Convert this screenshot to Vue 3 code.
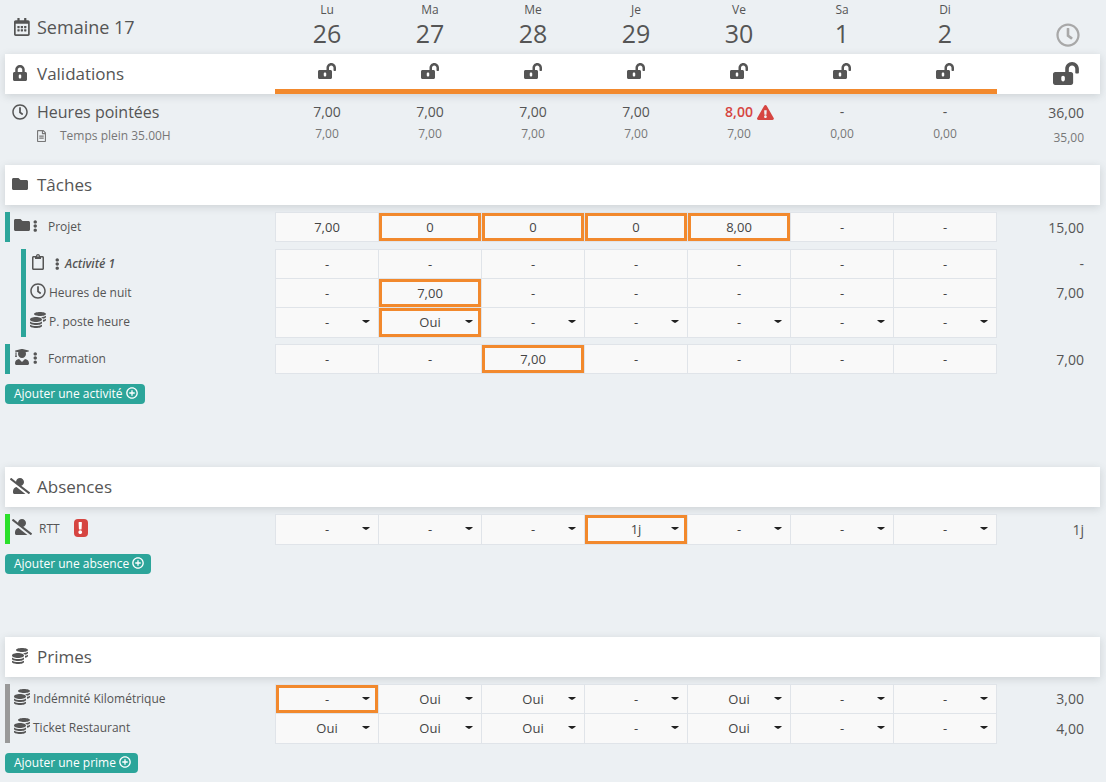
<script setup>
import { h, reactive } from 'vue'

const shapes = {
  calendar: ['0 0 448 512', 'M148 288h-40c-6.6 0-12-5.4-12-12v-40c0-6.6 5.4-12 12-12h40c6.6 0 12 5.4 12 12v40c0 6.6-5.4 12-12 12zm108-12v-40c0-6.6-5.4-12-12-12h-40c-6.6 0-12 5.4-12 12v40c0 6.6 5.4 12 12 12h40c6.6 0 12-5.4 12-12zm96 0v-40c0-6.6-5.4-12-12-12h-40c-6.6 0-12 5.4-12 12v40c0 6.6 5.4 12 12 12h40c6.6 0 12-5.4 12-12zm-96 96v-40c0-6.6-5.4-12-12-12h-40c-6.6 0-12 5.4-12 12v40c0 6.6 5.4 12 12 12h40c6.6 0 12-5.4 12-12zm-96 0v-40c0-6.6-5.4-12-12-12h-40c-6.6 0-12 5.4-12 12v40c0 6.6 5.4 12 12 12h40c6.6 0 12-5.4 12-12zm192 0v-40c0-6.6-5.4-12-12-12h-40c-6.6 0-12 5.4-12 12v40c0 6.6 5.4 12 12 12h40c6.6 0 12-5.4 12-12zm96-260v352c0 26.5-21.5 48-48 48H48c-26.5 0-48-21.5-48-48V112c0-26.5 21.5-48 48-48h48V12c0-6.6 5.4-12 12-12h40c6.6 0 12 5.4 12 12v52h128V12c0-6.6 5.4-12 12-12h40c6.6 0 12 5.4 12 12v52h48c26.5 0 48 21.5 48 48zm-48 346V160H48v298c0 3.3 2.7 6 6 6h340c3.3 0 6-2.7 6-6z'],
  lock: ['0 0 448 512', 'M400 224h-24v-72C376 68.2 307.8 0 224 0S72 68.2 72 152v72H48c-26.5 0-48 21.5-48 48v192c0 26.5 21.5 48 48 48h352c26.5 0 48-21.5 48-48V272c0-26.5-21.5-48-48-48zM264 392c0 22.1-17.9 40-40 40s-40-17.9-40-40v-48c0-22.1 17.9-40 40-40s40 17.9 40 40v48zm32-168H152v-72c0-39.7 32.3-72 72-72s72 32.3 72 72v72z'],
  unlock: ['0 0 576 512', 'M423.5 0C339.5.3 272 69.5 272 153.5V224H48c-26.5 0-48 21.5-48 48v192c0 26.5 21.5 48 48 48h352c26.5 0 48-21.5 48-48V272c0-26.5-21.5-48-48-48h-48v-71.1c0-39.6 31.7-72.5 71.3-72.9 40-.4 72.7 32.1 72.7 72v80c0 13.3 10.7 24 24 24h32c13.3 0 24-10.7 24-24v-80C576 68 507.5-.3 423.5 0zM264 392c0 22.1-17.9 40-40 40s-40-17.9-40-40v-48c0-22.1 17.9-40 40-40s40 17.9 40 40v48z'],
  clock: ['0 0 512 512', 'M256 8C119 8 8 119 8 256s111 248 248 248 248-111 248-248S393 8 256 8zm0 448c-110.5 0-200-89.5-200-200S145.5 56 256 56s200 89.5 200 200-89.5 200-200 200zm61.8-104.4l-84.9-61.7c-3.1-2.3-4.9-5.9-4.9-9.7V116c0-6.6 5.4-12 12-12h32c6.6 0 12 5.4 12 12v141.7l66.8 48.6c5.4 3.9 6.5 11.4 2.6 16.8L334.6 349c-3.9 5.3-11.4 6.5-16.8 2.6z'],
  file: ['0 0 384 512', 'M288 248v28c0 6.6-5.4 12-12 12H108c-6.6 0-12-5.4-12-12v-28c0-6.6 5.4-12 12-12h168c6.6 0 12 5.4 12 12zm-12 72H108c-6.6 0-12 5.4-12 12v28c0 6.6 5.4 12 12 12h168c6.6 0 12-5.4 12-12v-28c0-6.6-5.4-12-12-12zm108-188.1V464c0 26.5-21.5 48-48 48H48c-26.5 0-48-21.5-48-48V48C0 21.5 21.5 0 48 0h204.1C264.8 0 277 5.1 286 14.1L369.9 98c9 8.9 14.1 21.2 14.1 33.9zm-128-80V128h76.1L256 51.9zM336 464V176H232c-13.3 0-24-10.7-24-24V48H48v416h288z'],
  folder: ['0 0 512 512', 'M464 128H272l-64-64H48C21.49 64 0 85.49 0 112v288c0 26.51 21.49 48 48 48h416c26.51 0 48-21.49 48-48V176c0-26.51-21.49-48-48-48z'],
  clipboard: ['0 0 384 512', 'M336 64h-80c0-35.3-28.7-64-64-64s-64 28.7-64 64H48C21.5 64 0 85.5 0 112v352c0 26.5 21.5 48 48 48h288c26.5 0 48-21.5 48-48V112c0-26.5-21.5-48-48-48zM192 40c13.3 0 24 10.7 24 24s-10.7 24-24 24-24-10.7-24-24 10.7-24 24-24zm144 418c0 3.3-2.7 6-6 6H54c-3.3 0-6-2.7-6-6V118c0-3.3 2.7-6 6-6h42v36c0 6.6 5.4 12 12 12h168c6.6 0 12-5.4 12-12v-36h42c3.3 0 6 2.7 6 6z'],
  coins: ['0 0 512 512', 'M0 405.3V448c0 35.3 86 64 192 64s192-28.7 192-64v-42.7C342.7 434.4 267.2 448 192 448S41.3 434.4 0 405.3zM320 128c106 0 192-28.7 192-64S426 0 320 0 128 28.7 128 64s86 64 192 64zM0 300.4V352c0 35.3 86 64 192 64s192-28.7 192-64v-51.6c-41.3 34-116.9 51.6-192 51.6S41.3 334.4 0 300.4zm416 11c57.3-11.1 96-31.7 96-55.4v-42.7c-23.2 16.4-57.3 27.6-96 34.5v63.6zM192 160C86 160 0 195.8 0 240s86 80 192 80 192-35.8 192-80-86-80-192-80zm219.3 56.3c60-10.8 100.7-32 100.7-56.3v-42.7c-35.5 25.1-96.5 38.6-160.7 41.8 29.5 14.3 51.2 33.5 60 57.2z'],
  away: ['0 0 640 512', 'M633.8 458.1L362.3 248.3C412.1 230.7 448 183.8 448 128 448 57.3 390.7 0 320 0c-67.1 0-121.5 51.8-126.9 117.4L45.5 3.4C38.5-2 28.5-.8 23 6.2L3.4 31.4c-5.4 7-4.2 17 2.8 22.4l588.4 454.7c7 5.4 17 4.2 22.5-2.8l19.6-25.3c5.4-6.8 4.1-16.9-2.9-22.3zM96 422.4V464c0 26.5 21.5 48 48 48h350.2L207.4 290.3C144.2 301.3 96 356 96 422.4z'],
  graduate: ['0 0 448 512', 'M319.4 320.6L224 416l-95.4-95.4C57.1 323.7 0 382.2 0 454.4v9.6c0 26.5 21.5 48 48 48h352c26.5 0 48-21.5 48-48v-9.6c0-72.2-57.1-130.7-128.6-133.8zM13.6 79.8l6.4 1.5v58.4c-7 4.2-12 11.5-12 20.3 0 8.4 4.6 15.4 11.1 19.7L3.5 242c-1.7 6.9 2.1 14 7.6 14h41.8c5.5 0 9.3-7.1 7.6-14l-15.6-62.3C51.4 175.4 56 168.4 56 160c0-8.8-5-16.1-12-20.3V87.1l66 15.9c-8.6 17.2-14 36.4-14 57 0 70.7 57.3 128 128 128s128-57.3 128-128c0-20.6-5.3-39.8-14-57l96.3-23.2c18.2-4.4 18.2-27.1 0-31.5l-190.4-46c-13-3.1-26.7-3.1-39.7 0L13.6 48.2c-18.1 4.4-18.1 27.2 0 31.6z'],
  dots: ['0 0 192 512', 'M96 184c39.8 0 72 32.2 72 72s-32.2 72-72 72-72-32.2-72-72 32.2-72 72-72zM24 80c0 39.8 32.2 72 72 72s72-32.2 72-72S135.8 8 96 8 24 40.2 24 80zm0 352c0 39.8 32.2 72 72 72s72-32.2 72-72-32.2-72-72-72-72 32.2-72 72z'],
  warning: ['0 0 576 512', 'M569.517 440.013C587.975 472.007 564.806 512 527.94 512H48.054c-36.937 0-59.999-40.055-41.577-71.987L246.423 23.985c18.467-32.009 64.72-31.951 83.154 0l239.94 416.028zM288 354c-25.405 0-46 20.595-46 46s20.595 46 46 46 46-20.595 46-46-20.595-46-46-46zm-43.673-165.346l7.418 136c.347 6.364 5.609 11.346 11.982 11.346h48.546c6.373 0 11.635-4.982 11.982-11.346l7.418-136c.375-6.874-5.098-12.654-11.982-12.654h-63.383c-6.884 0-12.356 5.78-11.981 12.654z'],
  exclamation: ['0 0 192 512', 'M176 432c0 44.112-35.888 80-80 80s-80-35.888-80-80 35.888-80 80-80 80 35.888 80 80zM25.26 25.199l13.6 272C39.499 309.972 50.041 320 62.83 320h66.34c12.789 0 23.331-10.028 23.97-22.801l13.6-272C167.425 11.49 156.496 0 142.77 0H49.23C35.504 0 24.575 11.49 25.26 25.199z'],
  plus: ['0 0 512 512', 'M256 8C119 8 8 119 8 256s111 248 248 248 248-111 248-248S393 8 256 8zm0 440c-106 0-192-86-192-192S150 64 256 64s192 86 192 192-86 192-192 192zM228 140h56v88h88v56h-88v88h-56v-88h-88v-56h88z'],
  caret: ['0 0 8 4', 'M0 0h8Q7 1.2 5 2.6Q4 3.4 3 2.6Q1 1.2 0 0z']
}

const Icon = (props) =>
  h('svg', { viewBox: shapes[props.name][0], 'aria-hidden': 'true' }, [
    h('path', { d: shapes[props.name][1], fill: 'currentColor' })
  ])
Icon.props = ['name']

const days = [
  { name: 'Lu', number: 26, clocked: '7,00', planned: '7,00' },
  { name: 'Ma', number: 27, clocked: '7,00', planned: '7,00' },
  { name: 'Me', number: 28, clocked: '7,00', planned: '7,00' },
  { name: 'Je', number: 29, clocked: '7,00', planned: '7,00' },
  { name: 'Ve', number: 30, clocked: '8,00', planned: '7,00', alert: true },
  { name: 'Sa', number: 1, clocked: '-', planned: '0,00' },
  { name: 'Di', number: 2, clocked: '-', planned: '0,00' }
]

const sections = reactive([
  {
    title: 'Tâches', icon: 'folder', add: 'Ajouter une activité',
    groups: [
      { tone: 'teal', rows: [
        { label: 'Projet', icon: 'folder', menu: true, total: '15,00', marked: [1, 2, 3, 4],
          values: ['7,00', '0', '0', '0', '8,00', '-', '-'] }
      ] },
      { tone: 'teal', nested: true, rows: [
        { label: 'Activité 1', icon: 'clipboard', menu: true, strong: true, total: '-', marked: [],
          values: ['-', '-', '-', '-', '-', '-', '-'] },
        { label: 'Heures de nuit', icon: 'clock', total: '7,00', marked: [1],
          values: ['-', '7,00', '-', '-', '-', '-', '-'] },
        { label: 'P. poste heure', icon: 'coins', total: '', marked: [1], options: ['-', 'Oui'],
          values: ['-', 'Oui', '-', '-', '-', '-', '-'] }
      ] },
      { tone: 'teal', rows: [
        { label: 'Formation', icon: 'graduate', menu: true, total: '7,00', marked: [2],
          values: ['-', '-', '7,00', '-', '-', '-', '-'] }
      ] }
    ]
  },
  {
    title: 'Absences', icon: 'away', add: 'Ajouter une absence',
    groups: [
      { tone: 'green', rows: [
        { label: 'RTT', icon: 'away', alert: true, total: '1j', marked: [3], options: ['-', '1j'],
          values: ['-', '-', '-', '1j', '-', '-', '-'] }
      ] }
    ]
  },
  {
    title: 'Primes', icon: 'coins', add: 'Ajouter une prime',
    groups: [
      { tone: 'grey', rows: [
        { label: 'Indémnité Kilométrique', icon: 'coins', total: '3,00', marked: [0], options: ['-', 'Oui'],
          values: ['-', 'Oui', 'Oui', '-', 'Oui', '-', '-'] },
        { label: 'Ticket Restaurant', icon: 'coins', total: '4,00', marked: [], options: ['-', 'Oui'],
          values: ['Oui', 'Oui', 'Oui', '-', 'Oui', '-', '-'] }
      ] }
    ]
  }
])
</script>

<template>
  <main class="sheet">
    <table class="summary">
      <thead>
        <tr class="line week">
          <th class="title" scope="col"><span class="slot"><Icon name="calendar" class="i-calendar" /></span>Semaine 17</th>
          <th v-for="d in days" :key="d.name" class="day" scope="col">
            <span class="day-name">{{ d.name }}</span>
            <span class="day-number">{{ d.number }}</span>
          </th>
          <th class="total" scope="col" aria-label="Total"><Icon name="clock" class="i-big-clock" /></th>
        </tr>
      </thead>
      <tbody>
        <tr class="line bar">
          <th class="title" scope="row"><span class="slot"><Icon name="lock" class="i-16" /></span>Validations</th>
          <td v-for="d in days" :key="d.name" class="validation">
            <button type="button" class="plain" :aria-label="`Valider ${d.name} ${d.number}`"><Icon name="unlock" class="i-16" /></button>
          </td>
          <td class="total">
            <button type="button" class="plain" aria-label="Valider la semaine"><Icon name="unlock" class="i-big-lock" /></button>
          </td>
        </tr>
        <tr class="line clocked">
          <th class="title" scope="row"><span class="slot"><Icon name="clock" class="i-16" /></span>Heures pointées</th>
          <td v-for="d in days" :key="d.name" class="amount" :class="{ alert: d.alert }">
            <span>{{ d.clocked }}</span><Icon v-if="d.alert" name="warning" class="i-warning" />
          </td>
          <td class="total">36,00</td>
        </tr>
        <tr class="line planned">
          <th class="contract" scope="row"><Icon name="file" class="i-12" />Temps plein 35.00H</th>
          <td v-for="d in days" :key="d.name">{{ d.planned }}</td>
          <td class="total">35,00</td>
        </tr>
      </tbody>
    </table>

    <section v-for="s in sections" :key="s.title" class="block">
      <h2 class="bar title"><span class="slot"><Icon :name="s.icon" class="i-16" /></span>{{ s.title }}</h2>
      <table class="entries">
        <tbody v-for="(g, gi) in s.groups" :key="gi" class="group" :class="[g.tone, { nested: g.nested }]">
          <tr v-for="r in g.rows" :key="r.label" class="line entry" :class="{ choice: r.options }">
            <th class="label" scope="row">
              <span class="slot"><Icon :name="r.icon" class="i-16" /></span>
              <button v-if="r.menu" type="button" class="plain menu" :aria-label="`Menu ${r.label}`"><Icon name="dots" class="i-12" /></button>
              <span class="name" :class="{ strong: r.strong, indented: r.alert }">{{ r.label }}</span>
              <span v-if="r.alert" class="badge"><Icon name="exclamation" class="i-12" /></span>
            </th>
            <td v-for="(d, i) in days" :key="d.name" class="cell">
              <template v-if="r.options">
                <select v-model="r.values[i]" class="field" :class="{ marked: r.marked.includes(i) }" :aria-label="`${r.label} ${d.name} ${d.number}`">
                  <option v-for="o in r.options" :key="o">{{ o }}</option>
                </select>
                <Icon name="caret" class="caret" />
              </template>
              <input v-else v-model="r.values[i]" type="text" class="field" :class="{ marked: r.marked.includes(i) }" :aria-label="`${r.label} ${d.name} ${d.number}`">
            </td>
            <td class="total">{{ r.total }}</td>
          </tr>
        </tbody>
      </table>
      <button type="button" class="add">{{ s.add }}<Icon name="plus" class="i-12" /></button>
    </section>
  </main>
</template>

<style>
body {
  margin: 0;
  background: #ecf0f3;
}
</style>

<style scoped>
.sheet {
  padding: 0 6px 8px 5px;
  color: #555;
  font-family: "Open Sans", "Noto Sans", sans-serif;
  font-size: 12px;
}
table, thead, tbody {
  display: block;
}
.line {
  display: grid;
  grid-template-columns: 270px repeat(7, minmax(0, 1fr)) 104px;
}
th, td {
  padding: 0;
  font-weight: 400;
  text-align: center;
}
svg {
  display: block;
  flex: none;
}
.i-12 { height: 12px; }
.i-16 { height: 16px; }
.i-calendar { height: 18px; }
.i-warning { height: 15px; }
.i-big-lock { height: 23px; }
.i-big-clock { height: 24px; color: #a8a8a8; }

.plain {
  display: flex;
  padding: 0;
  border: 0;
  background: none;
  color: inherit;
  cursor: pointer;
}
.slot {
  display: flex;
  flex: none;
  justify-content: center;
  width: 20px;
}
.title {
  display: flex;
  align-items: center;
  gap: 7px;
  padding-left: 5px;
  font-size: 17px;
  font-weight: 400;
}
.total {
  display: flex;
  align-items: center;
  justify-content: flex-end;
  padding: 0 16px 0 0;
  font-size: 14px;
}

.week {
  height: 54px;
}
.week .title {
  padding-left: 7px;
  gap: 5px;
  font-size: 18px;
}
.week .total {
  padding: 16px 20px 0 0;
}
.day {
  display: flex;
  flex-direction: column;
  padding-left: 1px;
}
.day-name {
  line-height: 20px;
}
.day-number {
  font-size: 25px;
  line-height: 26px;
}

.bar {
  box-sizing: border-box;
  height: 40px;
  margin: 0;
  background: #fff;
  box-shadow: 0 2px 8px rgba(60, 70, 80, 0.18);
}
.bar.title,
.bar .title {
  padding-bottom: 2px;
}
.validation {
  display: flex;
  align-items: center;
  justify-content: center;
  padding-bottom: 2px;
  border-bottom: 5px solid #f2892d;
}
.validation:nth-child(8) {
  margin-right: -1px;
}
.bar .total {
  padding: 0 21px 2px 0;
}

.clocked {
  margin-top: 8px;
  line-height: 22px;
}
.clocked .title,
.clocked .amount {
  height: 22px;
}
.clocked .title {
  font-size: 16px;
}
.clocked > * {
  margin-top: -1px;
}
.clocked .total {
  margin-top: 0;
}
.amount {
  display: grid;
  grid-template-columns: 1fr auto 1fr;
  align-items: center;
  column-gap: 4px;
  padding-left: 1px;
  font-size: 14px;
}
.amount span {
  grid-column: 2;
}
.amount.alert {
  color: #d64541;
  font-weight: 600;
}
.planned {
  height: 20px;
  color: #777;
  line-height: 20px;
}
.planned td {
  padding-left: 1px;
}
.planned .total {
  padding-top: 4px;
  font-size: 12px;
}
.contract {
  display: flex;
  align-items: center;
  gap: 14px;
  padding-left: 32px;
}
.summary {
  margin-bottom: 21px;
}
.block {
  margin-bottom: 63px;
}
.block:last-child {
  margin-bottom: 0;
}
.entries {
  margin: 7px 0 10px;
}
.group {
  margin-bottom: 7px;
}
.group:last-child {
  margin-bottom: 0;
}
.entry {
  height: 29px;
}
.entry:last-child {
  height: 30px;
}
.label {
  display: flex;
  align-items: center;
  padding-left: 2px;
  border-left: 5px solid #2ca59a;
}
.entry:last-child .label {
  padding-bottom: 2px;
}
.label .slot {
  width: 19px;
  margin: 0 1px 3px 0;
}
.nested .label {
  margin-left: 16px;
}
.green .label {
  border-color: #2be02b;
}
.grey .label {
  border-color: #999;
}
.menu {
  justify-content: center;
  width: 6px;
}
.name {
  margin-left: 1px;
}
.menu + .name {
  margin-left: 10px;
}
.name.indented {
  margin-left: 7px;
}
.nested .menu {
  margin-left: 6px;
}
.nested .name.strong {
  margin-left: 5px;
  font-style: italic;
  font-weight: 600;
}
.badge {
  display: flex;
  align-items: center;
  justify-content: center;
  width: 14px;
  height: 18px;
  margin-left: 14px;
  border-radius: 4px;
  background: #d64541;
  color: #fff;
}
.cell {
  display: grid;
  align-items: center;
  border: solid #e0e4e9;
  border-width: 1px 0 0 1px;
  background: #f9f9f9;
}
.entry:last-child .cell {
  border-bottom-width: 1px;
}
.choice:last-child .cell {
  margin-bottom: -1px;
}
.cell:nth-child(8) {
  margin-right: -1px;
  border-right-width: 1px;
}
.field {
  grid-area: 1 / 1;
  box-sizing: border-box;
  width: 100%;
  height: 100%;
  min-width: 0;
  margin: 0;
  padding: 0;
  border: 3px solid transparent;
  border-radius: 0;
  outline: 0;
  background: transparent;
  color: #444;
  font: inherit;
  font-size: 13px;
  text-align: center;
  text-align-last: center;
  appearance: none;
}
.choice:last-child .field {
  padding-bottom: 2px;
}
.cell .marked {
  border-color: #f2892d;
}
.caret {
  grid-area: 1 / 1;
  justify-self: end;
  width: 8px;
  margin: 0 8px 1px 0;
  color: #222;
  pointer-events: none;
}
.add {
  display: flex;
  align-items: center;
  gap: 3px;
  height: 20px;
  padding: 0 7px 2px 9px;
  border: 0;
  border-radius: 4px;
  background: #2ca59a;
  color: #fff;
  font: inherit;
  cursor: pointer;
}
</style>
